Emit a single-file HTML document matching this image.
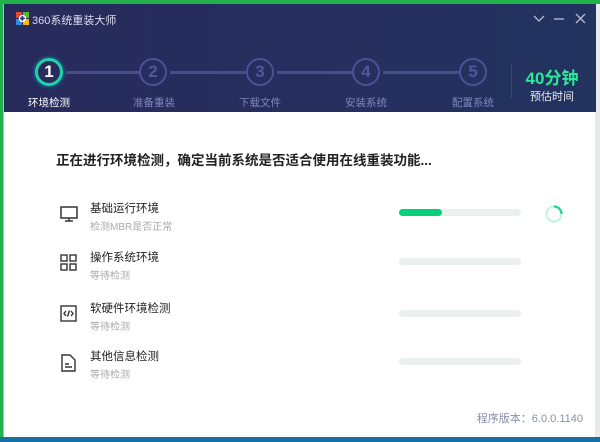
<!DOCTYPE html>
<html><head><meta charset="utf-8"><style>
*{margin:0;padding:0;box-sizing:border-box}
body{width:600px;height:442px;position:relative;overflow:hidden;background:#e8eaec;font-family:"Liberation Sans","Noto Sans CJK SC",sans-serif}
.abs{position:absolute}
#top{left:0;top:0;width:600px;height:4px;background:#22b24c}
#lside{left:0;top:0;width:3px;height:442px;background:#22b24c}
#bot{left:0;top:437px;width:600px;height:5px;background:#1670a8}
#win{left:3px;top:4px;width:592px;height:433px;background:#fff;border-left:1px solid #bbb}
#hdr{left:0;top:0;width:592px;height:108px;background:linear-gradient(90deg,#272b5c,#262f5e 60%,#22335e)}
.t{color:#fff;white-space:nowrap}
.c{position:absolute;width:28px;height:28px;border-radius:50%;border:2px solid #4a5296;color:#4e57a0;font-size:17px;font-weight:bold;text-align:center;line-height:24px}
.ln{position:absolute;height:3px;background:#454d8f;top:67px}
.lb{position:absolute;font-size:10.5px;color:#7f86bd;width:80px;text-align:center;top:91px}
.row .ti{position:absolute;left:86px;font-size:11.5px;color:#222}
.row .su{position:absolute;left:86px;font-size:10px;color:#aaa}
.bar{position:absolute;left:395px;width:122px;height:7px;border-radius:4px;background:#eceff0}
</style></head><body>
<div id="top" class="abs"></div><div id="lside" class="abs"></div><div id="bot" class="abs"></div>
<div id="win" class="abs">
<div id="hdr" class="abs">
 <svg class="abs" style="left:12px;top:8px" width="13" height="13"><rect x="0" y="0" width="6" height="6" fill="#e4472a"/><rect x="7" y="0" width="6" height="6" fill="#5fb532"/><rect x="0" y="7" width="6" height="6" fill="#2f8ce0"/><rect x="7" y="7" width="6" height="6" fill="#f5b800"/><circle cx="6.5" cy="6.5" r="3" fill="none" stroke="#fff" stroke-width="1.3"/></svg>
 <div class="abs t" style="left:28px;top:8px;font-size:11px;color:#dde">360系统重装大师</div>
 <svg class="abs" style="left:528px;top:9px" width="62" height="12" stroke="#b8bcd8" stroke-width="1.3" fill="none"><path d="M2 3l5 5 5-5"/><path d="M22 6h10"/><path d="M44 1l9 9M53 1l-9 9"/></svg>
 <div class="c" style="left:31px;top:54px;border-color:#1ed5a8;border-width:3px;color:#fff;line-height:22px;box-shadow:0 0 4px #19b">1</div>
 <div class="ln" style="left:62px;width:73px"></div>
 <div class="c" style="left:135px;top:54px">2</div>
 <div class="ln" style="left:166px;width:77px"></div>
 <div class="c" style="left:242px;top:54px">3</div>
 <div class="ln" style="left:273px;width:76px"></div>
 <div class="c" style="left:348px;top:54px">4</div>
 <div class="ln" style="left:379px;width:77px"></div>
 <div class="c" style="left:455px;top:54px">5</div>
 <div class="lb" style="left:5px;color:#fff">环境检测</div>
 <div class="lb" style="left:110px">准备重装</div>
 <div class="lb" style="left:216px">下载文件</div>
 <div class="lb" style="left:322px">安装系统</div>
 <div class="lb" style="left:429px">配置系统</div>
 <div class="abs" style="left:507px;top:60px;width:1px;height:34px;background:#3a4680"></div>
 <div class="abs t" style="left:514px;top:60px;width:68px;text-align:center;font-size:17px;font-weight:bold;color:#2ee89a">40分钟</div>
 <div class="abs t" style="left:514px;top:84px;width:68px;text-align:center;font-size:11px;color:#e8e8f0">预估时间</div>
</div>
<div class="abs" style="left:52px;top:145px;font-size:13.5px;font-weight:bold;color:#222;white-space:nowrap">正在进行环境检测，确定当前系统是否适合使用在线重装功能...</div>
<div class="row">
 <svg class="abs" style="left:56px;top:202px" width="18" height="16" fill="none" stroke="#333" stroke-width="1.5"><rect x="1" y="1" width="16" height="11"/><path d="M9 12v3M5 15h8"/></svg>
 <div class="ti" style="top:196px">基础运行环境</div><div class="su" style="top:214px">检测MBR是否正常</div>
 <div class="bar" style="top:205px"><div style="width:43px;height:7px;border-radius:4px;background:#06d07a"></div></div>
 <svg class="abs" style="left:540px;top:200px" width="20" height="20"><circle cx="10" cy="10" r="7.5" fill="none" stroke="#c8f3e0" stroke-width="2.2"/><path d="M10 2.5A7.5 7.5 0 0 1 17.5 10" fill="none" stroke="#17d98a" stroke-width="2.2"/></svg>

 <svg class="abs" style="left:56px;top:250px" width="17" height="17" fill="none" stroke="#333" stroke-width="1.4"><rect x="1" y="1" width="6" height="6"/><rect x="10" y="1" width="6" height="6"/><rect x="1" y="10" width="6" height="6"/><rect x="10" y="10" width="6" height="6"/></svg>
 <div class="ti" style="top:245px">操作系统环境</div><div class="su" style="top:263px">等待检测</div>
 <div class="bar" style="top:254px"></div>

 <svg class="abs" style="left:56px;top:301px" width="17" height="17" fill="none" stroke="#333" stroke-width="1.4"><rect x="1" y="1" width="15" height="15"/><path d="M6 6l-2 2.5 2 2.5M11 6l2 2.5-2 2.5M9.5 5.5l-2 6"/></svg>
 <div class="ti" style="top:296px">软硬件环境检测</div><div class="su" style="top:314px">等待检测</div>
 <div class="bar" style="top:306px"></div>

 <svg class="abs" style="left:57px;top:350px" width="15" height="18" fill="none" stroke="#333" stroke-width="1.4"><path d="M1 1h8l5 5v11H1z"/><path d="M4 10h4M4 13h7"/></svg>
 <div class="ti" style="top:344px">其他信息检测</div><div class="su" style="top:362px">等待检测</div>
 <div class="bar" style="top:354px"></div>
</div>
<div class="abs" style="right:12px;top:406px;font-size:11px;color:#8a8fa8">程序版本：6.0.0.1140</div>
</div>
</body></html>
